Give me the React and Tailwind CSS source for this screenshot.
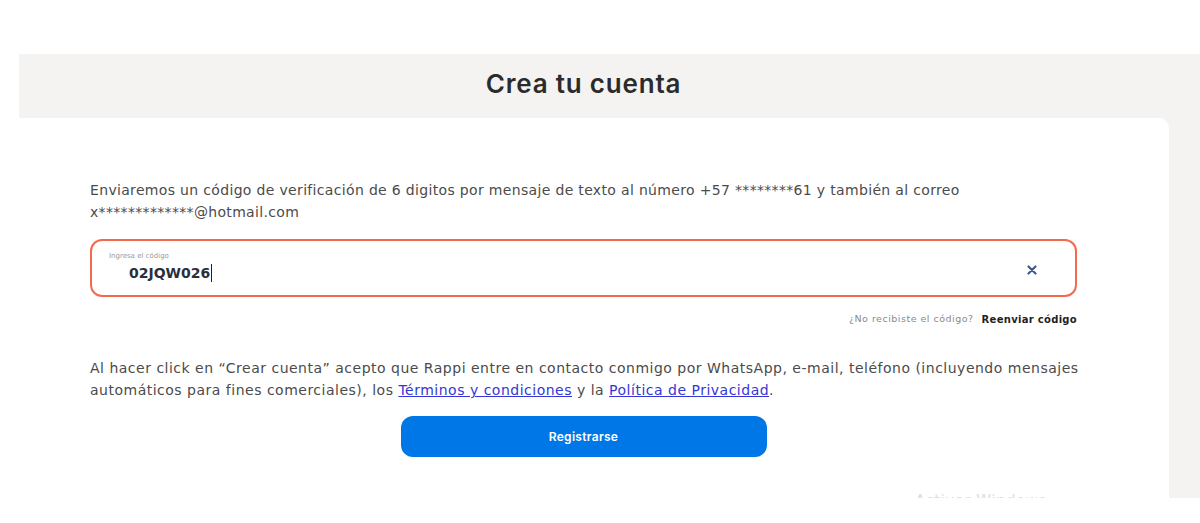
import React from 'react';

const App = () => {
    return (
        <div className="h-[523px] w-[1200px] bg-white overflow-hidden" style={{ fontFamily: '"DejaVu Sans", "Noto Sans", sans-serif' }}>
            <div className="h-[54px]" />
            <div className="ml-[19px] bg-[#f4f3f2] h-[444px] flex flex-col relative overflow-hidden">
                {/* Header */}
                <div className="h-[64px] flex items-center justify-center pr-[52px] pb-[6px]">
                    <h1 className="text-[26px] font-semibold text-[#2b2b2b] tracking-[0.8px]" style={{ fontFamily: 'Inter, sans-serif' }}>Crea tu cuenta</h1>
                </div>

                {/* Card */}
                <div className="w-[1150px] flex-1 bg-white rounded-tr-[10px] pl-[71px] pr-[92px] pt-[61px]">
                    <p className="text-[14px] leading-[22px] text-[#4b4b4b] tracking-[0.33px]">
                        Enviaremos un código de verificación de 6 digitos por mensaje de texto al número +57 ********61 y también al correo
                        <br />
                        x*************@hotmail.com
                    </p>

                    <div className="mt-[16px] h-[58px] border-2 border-[#f36a4f] rounded-[12px] flex items-center pl-[17px] pr-[38px]">
                        <div className="flex-1 flex flex-col">
                            <span className="text-[7px] leading-[9px] text-[#9a9a9a] -mt-[1px]">Ingresa el código</span>
                            <div className="flex items-center pl-[20px] mt-[2px]">
                                <span className="text-[14px] font-bold text-[#2a2f3b]">02JQW026</span>
                                <span className="w-[1px] h-[18px] bg-[#222] ml-[1px]" />
                            </div>
                        </div>
                        <svg width="10" height="10" viewBox="0 0 10 10" className="mt-[3px]">
                            <path d="M1.5 1.5 L8.5 8.5 M8.5 1.5 L1.5 8.5" stroke="#3d5c8f" strokeWidth="2.2" strokeLinecap="round" />
                        </svg>
                    </div>

                    <div className="flex justify-end items-center mt-[15px] gap-[8px]">
                        <span className="text-[9.5px] text-[#8a8a8a] tracking-[0.5px]">¿No recibiste el código?</span>
                        <span className="text-[10px] font-bold text-[#1f1f1f] tracking-[0.3px]">Reenviar código</span>
                    </div>

                    <p className="mt-[30px] text-[14px] leading-[22px] text-[#4b4b4b] tracking-[0.5px] whitespace-nowrap">
                        Al hacer click en “Crear cuenta” acepto que Rappi entre en contacto conmigo por WhatsApp, e-mail, teléfono (incluyendo mensajes
                        <br />
                        automáticos para fines comerciales), los{' '}
                        <a className="text-[#3436d6] underline">Términos y condiciones</a> y la{' '}
                        <a className="text-[#3436d6] underline">Política de Privacidad</a>.
                    </p>

                    <div className="flex justify-center mt-[15px]">
                        <button className="w-[366px] h-[41px] rounded-[12px] bg-[#0077e6] text-white text-[12px] font-semibold tracking-[0.3px]" style={{ fontFamily: 'Inter, sans-serif' }}>
                            Registrarse
                        </button>
                    </div>
                </div>

                <span className="absolute left-[896px] top-[436px] text-[15px] text-[#dedede] tracking-[0.5px]">Activar Windows</span>
            </div>
        </div>
    );
};

export default App;
